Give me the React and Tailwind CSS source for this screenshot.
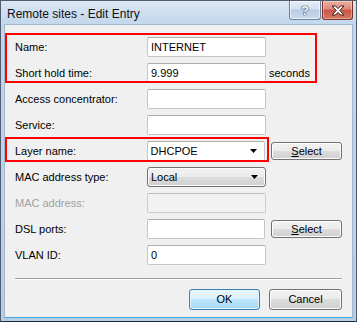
import React from 'react';

const btn =
  'h-[18px] w-[71px] rounded-[3px] border border-[#707070] bg-[linear-gradient(to_bottom,#f2f2f2_0%,#ebebeb_50%,#dddddd_50%,#cfcfcf_100%)] shadow-[inset_0_0_0_1px_#fcfcfc] text-[11px] text-black flex items-center justify-center';

const input =
  'h-[20px] w-[119px] rounded-[2px] border border-[#c3c6cc] border-t-[#abadb3] bg-white px-[3px] text-[11px] text-black flex items-center';

function Arrow() {
  return (
    <svg width="7" height="4" viewBox="0 0 7 4" className="ml-auto mr-[4px]">
      <path d="M0 0H7L3.5 4Z" fill="#000" />
    </svg>
  );
}

function Row({ label, disabled, children }) {
  return (
    <div className="flex items-center h-[20px]">
      <div
        className={
          'w-[132px] text-[11px] ' +
          (disabled ? 'text-[#a0a0a0]' : 'text-black')
        }
      >
        {label}
      </div>
      {children}
    </div>
  );
}

export default function App() {
  return (
    <div className="relative w-[357px] h-[322px] flex flex-col border border-[#4f5d6e] border-b-[#1f2a36] bg-[linear-gradient(to_bottom,#dbe7f4_0px,#c3d7ed_22px,#b6cde8_100%)] font-['Liberation_Sans',Arial,sans-serif]">
      {/* title bar */}
      <div className="h-[22px] flex items-start">
        <div className="pl-[6px] pt-[6px] text-[12px] leading-[14px] text-[#111]">
          Remote sites - Edit Entry
        </div>
        <div className="ml-auto mr-[3px] flex gap-[1px]">
          <div className="w-[32px] h-[19px] rounded-b-[3px] border border-t-0 border-[#6f8299] bg-[linear-gradient(to_bottom,#e6eef8_0%,#d2e0f0_45%,#b9cce3_50%,#c9daee_100%)] shadow-[inset_0_0_0_1px_rgba(255,255,255,0.6)] flex items-center justify-center">
            <span className="text-[13px] font-bold leading-none text-white [text-shadow:0_0_1px_#2c3a4a,0_0_1px_#2c3a4a,0_0_1px_#2c3a4a]">
              ?
            </span>
          </div>
          <div className="w-[31px] h-[19px] rounded-b-[3px] border border-t-0 border-[#7e3228] bg-[linear-gradient(to_bottom,#eab0a3_0%,#dc8b7c_45%,#c75647_50%,#d6785f_100%)] shadow-[inset_0_0_0_1px_rgba(255,255,255,0.35)] flex items-center justify-center">
            <svg width="14" height="11" viewBox="0 0 14 11">
              <path
                d="M1 1H4.5L7 3.6L9.5 1H13L8.8 5.5L13 10H9.5L7 7.4L4.5 10H1L5.2 5.5Z"
                fill="#fff"
                stroke="#3b1a16"
                strokeWidth="1"
                strokeLinejoin="round"
              />
            </svg>
          </div>
        </div>
      </div>

      {/* client area */}
      <div className="flex-1 ml-[3px] mr-[3px] mb-[3px] mt-[1px] bg-[#f0f0f0] border border-[#a3b8cf] border-b-[#3fa6e0] flex flex-col pl-[10px] pr-[10px] pt-[12px]">
        <div className="flex flex-col gap-[6px]">
          <Row label="Name:">
            <div className={input + ' border-[#8fb8e0] border-t-[#6fa3d6]'}>INTERNET</div>
          </Row>
          <Row label="Short hold time:">
            <div className={input}>9.999</div>
            <span className="ml-[3px] text-[11px] text-black">seconds</span>
          </Row>
          <Row label="Access concentrator:">
            <div className={input} />
          </Row>
          <Row label="Service:">
            <div className={input} />
          </Row>
          <Row label="Layer name:">
            <div className={input}>
              DHCPOE
              <Arrow />
            </div>
            <div className={btn + ' ml-[6px]'}>
              <span>
                <span className="underline">S</span>elect
              </span>
            </div>
          </Row>
          <Row label="MAC address type:">
            <div className="h-[20px] w-[119px] rounded-[3px] border border-[#707070] bg-[linear-gradient(to_bottom,#f2f2f2_0%,#ebebeb_50%,#dddddd_50%,#cfcfcf_100%)] shadow-[inset_0_0_0_1px_#fcfcfc] px-[3px] text-[11px] text-black flex items-center">
              Local
              <Arrow />
            </div>
          </Row>
          <Row label="MAC address:" disabled>
            <div className="h-[20px] w-[119px] rounded-[2px] border border-[#cdcdcd] border-t-[#bfbfbf] bg-[#f2f2f2]" />
          </Row>
          <Row label="DSL ports:">
            <div className={input} />
            <div className={btn + ' ml-[6px]'}>
              <span>
                <span className="underline">S</span>elect
              </span>
            </div>
          </Row>
          <Row label="VLAN ID:">
            <div className={input}>0</div>
          </Row>
        </div>

        <div className="mt-[13px] h-[2px] border-t border-[#a0a0a0] border-b border-b-white" />

        <div className="mt-[9px] flex justify-end gap-[9px]">
          <div className="h-[21px] w-[71px] rounded-[3px] border border-[#3c7fb1] bg-[linear-gradient(to_bottom,#eaf6fd_0%,#d9f0fc_50%,#bee6fd_50%,#a7d9f5_100%)] shadow-[inset_0_0_0_1px_#dff3fd] text-[11px] text-black flex items-center justify-center">
            OK
          </div>
          <div className="h-[21px] w-[73px] rounded-[3px] border border-[#707070] bg-[linear-gradient(to_bottom,#f2f2f2_0%,#ebebeb_50%,#dddddd_50%,#cfcfcf_100%)] shadow-[inset_0_0_0_1px_#fcfcfc] text-[11px] text-black flex items-center justify-center">
            Cancel
          </div>
        </div>
      </div>

      {/* annotation boxes */}
      <div className="absolute left-[4px] top-[32px] w-[312px] h-[50px] border-2 border-[#ff0000]" />
      <div className="absolute left-[4px] top-[136px] w-[264px] h-[25px] border-2 border-[#ff0000]" />
    </div>
  );
}
